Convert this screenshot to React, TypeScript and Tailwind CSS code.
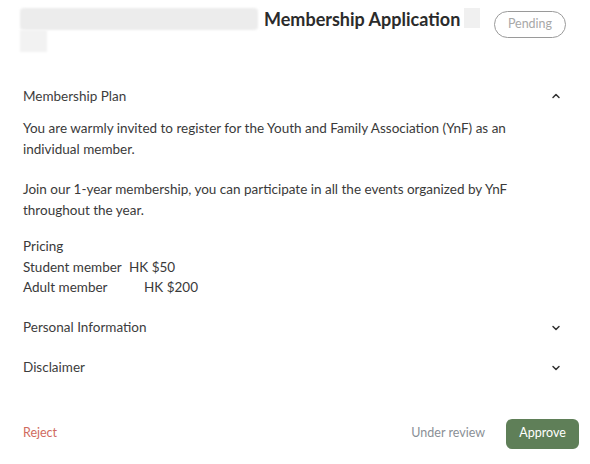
import { ChevronDown, ChevronUp } from "lucide-react";

function Section({
  title,
  open,
  children,
}: {
  title: string;
  open?: boolean;
  children?: React.ReactNode;
}) {
  return (
    <div>
      <div className="flex h-10 items-center justify-between pr-[5px]">
        <span className="text-[13.5px] text-[#3d3d3d]">{title}</span>
        {open ? (
          <ChevronUp className="h-3 w-3 text-[#333]" strokeWidth={3} />
        ) : (
          <ChevronDown className="h-3 w-3 text-[#333]" strokeWidth={3} />
        )}
      </div>
      {open && children}
    </div>
  );
}

export default function App() {
  return (
    <div
      className="h-[464px] w-[590px] bg-white px-[23px]"
      style={{ fontFamily: "Lato, 'Noto Sans', sans-serif" }}
    >
      <header className="flex items-start justify-between pt-2">
        <h1 className="w-[462px] text-[18px] font-bold leading-[22px] text-[#2b2b2b]">
          <span className="mr-[6px] inline-block h-[22px] w-[238px] -ml-[3px] align-top rounded-sm bg-[#ececec] blur-[1px]" />
          Membership Application
          <span className="ml-[4px] inline-block h-[20px] w-[16px] align-top bg-[#f0f0f0]" />{" "}
          <span className="-ml-[3px] inline-block h-[22px] w-[27px] align-top bg-[#f2f2f2] blur-[1px]" />
        </h1>
        <span className="mt-[3px] mr-[1px] flex h-[27px] w-[72px] items-center justify-center rounded-full border border-[#9a9a9a] text-[12.5px] text-[#a8a8a8]">
          Pending
        </span>
      </header>

      <main className="mt-[24px]">
        <Section title="Membership Plan" open>
          <div className="w-[520px] text-[13.5px] leading-[20.5px] text-[#3a3a3a]">
            <p className="pt-[2px]">
              You are warmly invited to register for the Youth and Family
              Association (YnF) as an individual member.
            </p>
            <p className="mt-[20px]">
              Join our 1-year membership, you can participate in all the events
              organized by YnF throughout the year.
            </p>
            <div className="mt-[16px]">
              <p>Pricing</p>
              <p>
                <span className="inline-block w-[106px]">Student member</span>
                HK $50
              </p>
              <p>
                <span className="inline-block w-[121px]">Adult member</span>
                HK $200
              </p>
            </div>
          </div>
        </Section>
        <div className="mt-[10px]">
          <Section title="Personal Information" />
          <Section title="Disclaimer" />
        </div>
      </main>

      <footer className="mt-[31px] flex items-center justify-between">
        <span className="text-[12.5px] text-[#d06a5e]">Reject</span>
        <div className="flex items-center gap-[21px] -mr-[12px]">
          <span className="text-[12.5px] text-[#8a8f96]">Under review</span>
          <button className="h-[30px] w-[73px] rounded-md bg-[#5f7f58] text-[12.5px] text-white">
            Approve
          </button>
        </div>
      </footer>
    </div>
  );
}
